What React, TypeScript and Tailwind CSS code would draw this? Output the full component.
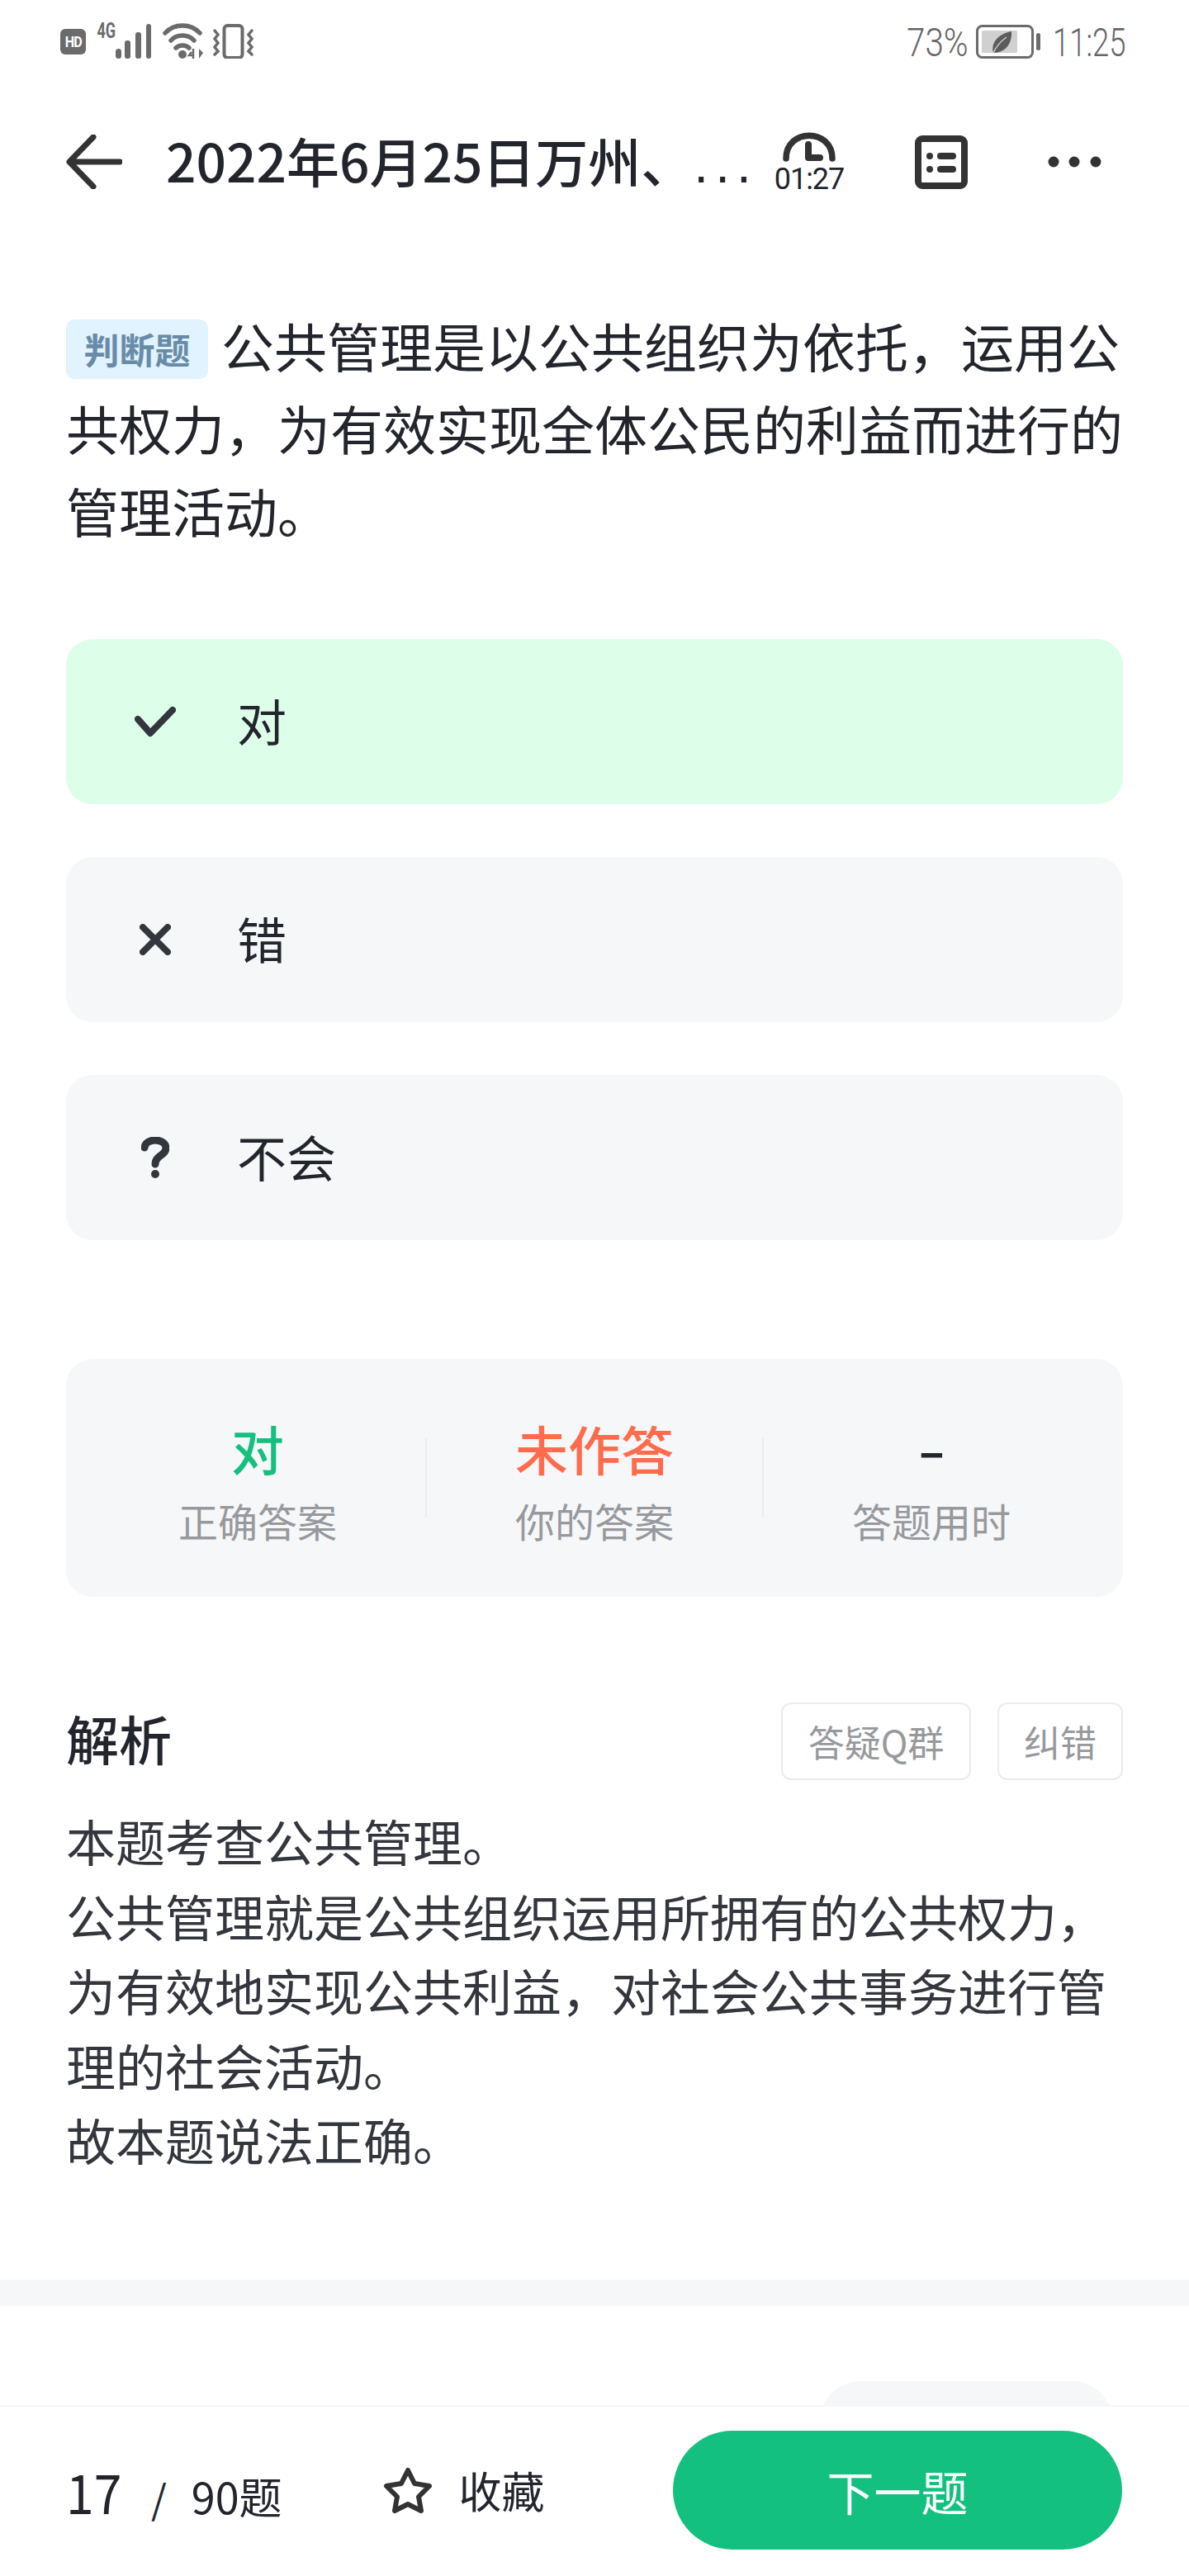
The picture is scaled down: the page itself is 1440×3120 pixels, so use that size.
import React from "react";

const CJK = "font-['Noto_Sans_CJK_SC','Noto_Sans',sans-serif]";

function StatusBar() {
  return (
    <div className="flex h-[96px] w-full items-start justify-between pl-[73px] pr-[77px] pt-[28px]">
      <div className="flex items-start">
        <div className="mt-[7px] flex h-[31px] w-[31px] items-center justify-center rounded-[6px] bg-[#6b6b6b] font-['Roboto',sans-serif] text-[19px] font-bold leading-none tracking-[-1px] text-white">
          <span className="inline-block scale-x-[0.85]">HD</span>
        </div>
        <div className="ml-[13px] flex w-[23px] justify-center font-['Roboto',sans-serif] text-[25px] font-bold leading-[20px] text-[#6b6b6b]">
          <span className="inline-block scale-x-[0.72] whitespace-nowrap">4G</span>
        </div>
        <svg className="ml-0 mt-[1px]" width="44" height="42" viewBox="0 0 44 42">
          <g fill="#6b6b6b">
            <rect x="0" y="30" width="7" height="12" rx="3.5" />
            <rect x="11" y="20" width="7" height="22" rx="3" />
            <rect x="24" y="10" width="7" height="32" rx="3" />
            <rect x="37" y="0" width="6" height="42" rx="3" />
          </g>
        </svg>
        <svg className="ml-[13px] mt-[0px]" width="50" height="44" viewBox="0 0 50 44">
          <g fill="none" stroke="#6b6b6b" strokeWidth="5.5" strokeLinecap="round">
            <path d="M3 12C14 0 34 0 45 12" />
            <path d="M10 21C17 13 31 13 38 21" />
            <path d="M16 30C20 26 28 26 32 30" />
          </g>
          <circle cx="24" cy="38" r="5" fill="#6b6b6b" />
          <path d="M37 31V43M35 35L32 39H37" fill="none" stroke="#6b6b6b" strokeWidth="2.5" />
          <path d="M44 31V43L49 36Z" fill="#6b6b6b" />
        </svg>
        <svg className="ml-[11px] mt-[1px]" width="50" height="42" viewBox="0 0 50 42">
          <rect x="13.5" y="2" width="22" height="39" rx="4" fill="none" stroke="#6b6b6b" strokeWidth="4" />
          <g fill="none" stroke="#6b6b6b" strokeWidth="3.5" strokeLinecap="round">
            <path d="M2 8L6 13L2 18L6 23L2 28L6 33L2 37" />
            <path d="M47 8L43 13L47 18L43 23L47 28L43 33L47 37" />
          </g>
        </svg>
      </div>
      <div className="flex items-start font-['Roboto',sans-serif] text-[48px] font-light leading-[48px] text-[#666666]">
        <div className="flex w-[73px] justify-center">
          <span className="inline-block scale-x-[0.84] whitespace-nowrap">73%</span>
        </div>
        <svg className="ml-[10px] mt-[2px]" width="80" height="41" viewBox="0 0 80 41">
          <rect x="1.5" y="1.5" width="67" height="38" rx="6" fill="none" stroke="#6b6b6b" strokeWidth="3" />
          <rect x="7" y="7" width="43" height="27" rx="2" fill="#d0d0d0" />
          <rect x="73" y="10" width="5" height="21" rx="2.5" fill="#6b6b6b" />
          <path d="M21 34C18 24 24 12 43 8C44 22 36 34 21 34Z" fill="#5c5c5c" />
          <path d="M21 34C25 25 30 20 37 15" fill="none" stroke="#d0d0d0" strokeWidth="1.5" />
        </svg>
        <div className="ml-[14px] flex w-[87px] justify-center">
          <span className="inline-block scale-x-[0.76] whitespace-nowrap">11:25</span>
        </div>
      </div>
    </div>
  );
}

function NavBar() {
  return (
    <div className="flex h-[200px] w-full items-center pl-[80px]">
      <svg width="68" height="66" viewBox="0 0 68 66">
        <path d="M65 33H5M33 3L4 33L33 63" fill="none" stroke="#333333" strokeWidth="7" strokeLinecap="round" strokeLinejoin="round" />
      </svg>
      <div className="ml-[53px] w-[695px] whitespace-nowrap text-[64px] font-medium leading-[80px] text-[#23252d]">
        2022年6月25日万州、
        <span className="font-['Liberation_Sans',sans-serif] tracking-[8px]">...</span>
      </div>
      <div className="ml-[42px] flex w-[84px] shrink-0 flex-col items-center">
        <svg width="66" height="40" viewBox="0 0 66 40">
          <path d="M5 34C5 -3 61 -3 61 34" fill="none" stroke="#333333" strokeWidth="7.5" strokeLinecap="round" />
          <path d="M32 17V33H46" fill="none" stroke="#333333" strokeWidth="8" strokeLinecap="round" strokeLinejoin="round" />
        </svg>
        <div className="mt-[1px] font-['Roboto',sans-serif] text-[36px] leading-[36px] tracking-[-1px] text-[#23252d]">
          01:27
        </div>
      </div>
      <svg className="ml-[86px]" width="64" height="65" viewBox="0 0 64 65">
        <rect x="4" y="4" width="56" height="57" rx="5" fill="none" stroke="#333333" strokeWidth="8" />
        <circle cx="18" cy="25" r="4" fill="#333333" />
        <circle cx="18" cy="41" r="4" fill="#333333" />
        <rect x="27" y="21" width="23" height="8" rx="4" fill="#333333" />
        <rect x="27" y="37" width="23" height="8" rx="4" fill="#333333" />
      </svg>
      <svg className="ml-[97px]" width="65" height="14" viewBox="0 0 65 14">
        <circle cx="7" cy="7" r="6.5" fill="#333333" />
        <circle cx="32" cy="7" r="6.5" fill="#333333" />
        <circle cx="58" cy="7" r="6.5" fill="#333333" />
      </svg>
    </div>
  );
}

function Option({ bg, icon, label }: { bg: string; icon: React.ReactNode; label: string }) {
  return (
    <div className={`flex h-[200px] w-full items-center rounded-[32px] ${bg}`}>
      <div className="ml-[68px] flex w-[80px] justify-center">{icon}</div>
      <div className="mb-[4px] ml-[59px] text-[60px] leading-[80px] text-[#23252d]">{label}</div>
    </div>
  );
}

function Stat({ value, label, color }: { value: React.ReactNode; label: string; color: string }) {
  return (
    <div className="flex w-[408px] flex-col items-center">
      <div className={`h-[96px] text-[64px] font-medium leading-[96px] ${color}`}>{value}</div>
      <div className="mt-[8px] text-[48px] leading-[64px] text-[#97999c]">{label}</div>
    </div>
  );
}

export default function App() {
  return (
    <div className={`flex h-[3120px] w-[1440px] flex-col overflow-hidden bg-white ${CJK}`}>
      <StatusBar />
      <NavBar />
      <main className="min-h-0 flex-1 overflow-hidden">
        <div className="px-[80px]">
          <p className="mt-[71px] text-[64px] leading-[100px] text-[#23252d]">
            <span className="mr-[16px] inline-flex h-[72px] w-[172px] items-center justify-center rounded-[10px] bg-[#e0f3fe] align-[4px] text-[43px] font-bold leading-none text-[#6a8ba8]">
              判断题
            </span>
            公共管理是以公共组织为依托，运用公共权力，为有效实现全体公民的利益而进行的管理活动。
          </p>
          <div className="mt-[107px] flex flex-col gap-[64px]">
            <Option
              bg="bg-[#ddfee9]"
              label="对"
              icon={
                <svg width="50" height="38" viewBox="0 0 50 38">
                  <path d="M4 16L19 33L46 5" fill="none" stroke="#33363d" strokeWidth="8" strokeLinecap="round" strokeLinejoin="round" />
                </svg>
              }
            />
            <Option
              bg="bg-[#f6f7f9]"
              label="错"
              icon={
                <svg width="38" height="38" viewBox="0 0 38 38">
                  <path d="M4 4L34 34M34 4L4 34" fill="none" stroke="#33363d" strokeWidth="8" strokeLinecap="round" />
                </svg>
              }
            />
            <Option
              bg="bg-[#f6f7f9]"
              label="不会"
              icon={
                <svg width="34" height="50" viewBox="0 0 34 50">
                  <path d="M4 13C5 1 29 1 30 13C30 23 17 22 17 33" fill="none" stroke="#33363d" strokeWidth="9" strokeLinecap="round" />
                  <circle cx="17" cy="45" r="5" fill="#33363d" />
                </svg>
              }
            />
          </div>
          <div className="mt-[144px] flex h-[288px] items-start rounded-[32px] bg-[#f6f7f9] pl-[28px] pt-[59px]">
            <Stat value="对" label="正确答案" color="text-[#14bf80]" />
            <div className="ml-[-1px] mr-[-1px] mt-[37px] h-[96px] w-[2px] shrink-0 bg-[#ebecee]" />
            <Stat value="未作答" label="你的答案" color="text-[#ff6b4d]" />
            <div className="ml-[-1px] mr-[-1px] mt-[37px] h-[96px] w-[2px] shrink-0 bg-[#ebecee]" />
            <Stat
              value={<span className="inline-block scale-x-[1.5]">-</span>}
              label="答题用时"
              color="text-[#23252d]"
            />
          </div>
          <div className="mt-[128px] flex h-[94px] items-center justify-between">
            <div className="mb-[10px] text-[64px] font-medium leading-[80px] text-[#23252d]">解析</div>
            <div className="flex gap-[32px]">
              <div className="flex h-[94px] w-[230px] items-center justify-center rounded-[12px] border-2 border-[#ebecee] text-[44px] text-[#97999c]">
                答疑Q群
              </div>
              <div className="flex h-[94px] w-[152px] items-center justify-center rounded-[12px] border-2 border-[#ebecee] text-[44px] text-[#97999c]">
                纠错
              </div>
            </div>
          </div>
          <div className="mt-[28px] text-[60px] leading-[90.5px] text-[#33363d]">
            <p>本题考查公共管理。</p>
            <p>公共管理就是公共组织运用所拥有的公共权力，为有效地实现公共利益，对社会公共事务进行管理的社会活动。</p>
            <p>故本题说法正确。</p>
          </div>
        </div>
        <div className="mt-[124px] h-[32px] w-full bg-[#f6f7f9]" />
        <div className="mt-[91px] flex justify-end pr-[92px]">
          <div className="h-[100px] w-[356px] rounded-[50px] bg-[#f6f7f9]" />
        </div>
      </main>
      <footer className="flex h-[207px] w-full shrink-0 items-center border-t-2 border-[#f6f7f9] pb-[3px] pl-[80px] pr-[81px]">
        <div className="flex items-baseline text-[#23252d]">
          <span className="inline-block w-[73px] origin-left scale-x-[0.92] text-[66px] leading-none">17</span>
          <span className="ml-[30px] text-[48px] leading-none">/</span>
          <span className="ml-[30px] text-[52px] leading-none">90题</span>
        </div>
        <svg className="ml-[122px]" width="60" height="56" viewBox="0 0 60 56">
          <path d="M30 4L38 20L56 23L43 36L46 53L30 45L14 53L17 36L4 23L22 20Z" fill="none" stroke="#333333" strokeWidth="6" strokeLinejoin="round" />
        </svg>
        <div className="ml-[32px] text-[52px] leading-none text-[#23252d]">收藏</div>
        <div className="ml-auto flex h-[144px] w-[544px] items-center justify-center rounded-full bg-[#14c07f] text-[57px] leading-none text-white">
          下一题
        </div>
      </footer>
    </div>
  );
}
